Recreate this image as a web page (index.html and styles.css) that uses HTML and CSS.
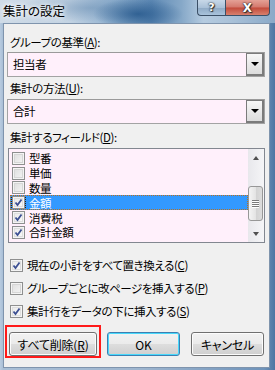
FILE: index.html
```html
<!DOCTYPE html>
<html lang="ja">
<head>
    <meta charset="UTF-8">
    <title>集計の設定</title>
    <link rel="stylesheet" href="styles.css">
</head>
<body>
    <div class="window">
        <div class="titlebar">
            <span class="title">集計の設定</span>
            <div class="caption">
                <span class="cap-btn help">?</span>
                <span class="cap-btn close">X</span>
            </div>
        </div>

        <div class="client">
            <div class="label lbl-first">グループの基準(<u>A</u>):</div>
            <div class="combo">
                <span class="combo-text">担当者</span>
                <span class="combo-btn"><span class="arrow"></span></span>
            </div>

            <div class="label lbl-second">集計の方法(<u>U</u>):</div>
            <div class="combo">
                <span class="combo-text">合計</span>
                <span class="combo-btn"><span class="arrow"></span></span>
            </div>

            <div class="label lbl-third">集計するフィールド(<u>D</u>):</div>
            <div class="listbox">
                <ul class="items">
                    <li class="item"><span class="box"></span><span>型番</span></li>
                    <li class="item"><span class="box"></span><span>単価</span></li>
                    <li class="item"><span class="box"></span><span>数量</span></li>
                    <li class="item selected"><span class="box checked focus"><svg viewBox="0 0 9 9"><path d="M1.5 4.5 L3.5 7 L7.5 1.5" /></svg></span><span>金額</span></li>
                    <li class="item"><span class="box checked"><svg viewBox="0 0 9 9"><path d="M1.5 4.5 L3.5 7 L7.5 1.5" /></svg></span><span>消費税</span></li>
                    <li class="item"><span class="box checked"><svg viewBox="0 0 9 9"><path d="M1.5 4.5 L3.5 7 L7.5 1.5" /></svg></span><span>合計金額</span></li>
                </ul>
                <div class="scrollbar">
                    <span class="sb-arrow up"></span>
                    <span class="sb-track"></span>
                    <span class="sb-thumb"><i></i><i></i><i></i><i></i></span>
                    <span class="sb-arrow down"></span>
                </div>
            </div>

            <div class="options">
                <div class="option"><span class="box checked"><svg viewBox="0 0 9 9"><path d="M1.5 4.5 L3.5 7 L7.5 1.5" /></svg></span><span>現在の小計をすべて置き換える(<u>C</u>)</span></div>
                <div class="option"><span class="box"></span><span>グループごとに改ページを挿入する(<u>P</u>)</span></div>
                <div class="option"><span class="box checked"><svg viewBox="0 0 9 9"><path d="M1.5 4.5 L3.5 7 L7.5 1.5" /></svg></span><span>集計行をデータの下に挿入する(<u>S</u>)</span></div>
            </div>

            <div class="buttons">
                <button class="btn btn-remove">すべて削除(<u>R</u>)</button>
                <button class="btn btn-ok">OK</button>
                <button class="btn btn-cancel">キャンセル</button>
                <span class="marker"></span>
            </div>
        </div>
    </div>
</body>
</html>
```

FILE: styles.css
```css
* {
    box-sizing: border-box;
}
body {
    margin: 0;
    width: 275px;
    height: 370px;
    overflow: hidden;
    font-family: "Noto Sans CJK JP", "Noto Sans", sans-serif;
    font-size: 11.5px;
    letter-spacing: -0.4px;
    font-feature-settings: "palt";
    color: #000;
}
u {
    text-decoration: underline;
    text-underline-offset: 1px;
}

/* window frame */
.window {
    width: 275px;
    height: 370px;
    display: flex;
    flex-direction: column;
    padding: 0 5px 2px 3px;
    background: linear-gradient(to right, #b8cbe0 0px, #a9bfd6 3px, #9fb6cf 50%, #6f93ba 96%, #4e76a2 100%);
}
.titlebar {
    height: 23px;
    margin: 0 -5px 0 -3px;
    display: flex;
    align-items: flex-start;
    padding-left: 3px;
    background:
        radial-gradient(ellipse 45px 16px at 138px 14px, rgba(38, 88, 140, 0.85), rgba(38, 88, 140, 0) 100%),
        radial-gradient(ellipse 70px 14px at 90px 8px, rgba(90, 130, 170, 0.45), rgba(90, 130, 170, 0) 100%),
        linear-gradient(to right, #cfdbe7 0%, #c3d3e3 25%, #8fb0cf 42%, #5f8ab5 55%, #86a8c8 66%, #b5cbe0 74%, #a9c1d8 84%, #8aa9c8 100%);
}
.title {
    line-height: 22px;
    font-size: 12.5px;
    letter-spacing: 0;
    text-shadow: 0 0 4px #fff, 0 0 6px #fff;
}
.caption {
    margin-left: auto;
    margin-right: 5px;
    display: flex;
}
.cap-btn {
    height: 16px;
    display: flex;
    align-items: center;
    justify-content: center;
    color: #fff;
    font-family: "DejaVu Sans", sans-serif;
    font-weight: bold;
    font-size: 11px;
    letter-spacing: 0;
    border: 1px solid #3b4f66;
    border-top: none;
    text-shadow: 0 0 1px #222, 0 0 2px #222, 1px 1px 1px #333;
}
.help {
    width: 28px;
    border-radius: 0 0 0 4px;
    border-right: none;
    background: linear-gradient(#c8d8e8 0%, #aac1d8 50%, #8ea9c4 51%, #a9c3dc 100%);
}
.close {
    width: 45px;
    border-radius: 0 0 4px 0;
    font-size: 12px;
    background: linear-gradient(#e4a196 0%, #d4786c 48%, #c24a3a 52%, #d8806e 100%);
}

/* client area */
.client {
    flex: 1;
    background-color: #f0f0f0;
    border: 1px solid #7f94ad;
    padding: 0 4px 0 3px;
    position: relative;
}
.label {
    height: 16px;
    line-height: 16px;
    padding-left: 3px;
}
.lbl-first {
    margin-top: 10px;
}
.lbl-second {
    margin-top: 3px;
}
.lbl-third {
    margin-top: 5px;
}

.combo {
    height: 25px;
    margin-top: 2px;
    display: flex;
    background-color: #fff0fb;
    border: 1px solid #a3a3a3;
    border-top-color: #9a9a9a;
}
.lbl-second + .combo {
    margin-top: 3px;
}
.combo-text {
    flex: 1;
    line-height: 23px;
    padding-left: 5px;
}
.combo-btn {
    width: 18px;
    margin: 0;
    border: 1px solid #7b7b7b;
    border-right-width: 2px;
    border-bottom-width: 2px;
    background: linear-gradient(#f7f7f7, #dcdcdc);
    display: flex;
    align-items: center;
    justify-content: center;
}
.arrow {
    width: 0;
    height: 0;
    border-left: 4px solid transparent;
    border-right: 4px solid transparent;
    border-top: 4px solid #000;
}

/* list box */
.listbox {
    height: 95px;
    margin: 3px 0 0 1px;
    display: flex;
    background-color: #fff0fb;
    border: 1px solid #828790;
}
.items {
    list-style: none;
    margin: 0;
    padding: 2px 0 0 1px;
    flex: 1;
}
.item {
    height: 14.8px;
    line-height: 14px;
    display: flex;
    align-items: center;
    gap: 4px;
    padding-left: 2px;
}
.item.selected {
    background-color: #3399ff;
    color: #fff;
    outline: 1px dotted #b87020;
    outline-offset: -1px;
}
.box {
    width: 13px;
    height: 13px;
    flex: none;
    border: 1px solid #8e8f8f;
    background: linear-gradient(135deg, #dcdcdc, #f6f6f6);
    box-shadow: inset 0 0 0 1px #f4f4f4, inset 0 0 0 2px #d6d6d6;
    display: flex;
    align-items: center;
    justify-content: center;
}
.box.checked {
    background: linear-gradient(135deg, #e8e8e8, #fbfbfb);
    box-shadow: inset 0 0 0 1px #f4f4f4, inset 0 0 0 2px #dedede;
}
.box.focus {
    outline: 1px dotted #222;
    outline-offset: 0;
}
.box svg {
    width: 9px;
    height: 9px;
}
.box path {
    fill: none;
    stroke: #3c4f92;
    stroke-width: 1.8;
}

.scrollbar {
    width: 16px;
    display: flex;
    flex-direction: column;
    align-items: center;
    background: linear-gradient(to right, #e8e8ec, #f5f5f7);
    position: relative;
}
.sb-arrow {
    height: 17px;
    width: 16px;
    display: flex;
    align-items: center;
    justify-content: center;
}
.sb-arrow::after {
    content: "";
    border-left: 3.5px solid transparent;
    border-right: 3.5px solid transparent;
}
.sb-arrow.up::after {
    border-bottom: 4px solid #505050;
}
.sb-arrow.down::after {
    border-top: 4px solid #505050;
}
.sb-track {
    flex: 1;
}
.sb-thumb {
    position: absolute;
    top: 37px;
    left: 0;
    width: 15px;
    height: 35px;
    border: 1px solid #979797;
    border-radius: 3px;
    background: linear-gradient(to right, #f4f4f4, #e4e4e4 50%, #d2d2d2 51%, #dcdcdc);
    display: flex;
    flex-direction: column;
    justify-content: center;
    align-items: center;
    gap: 1px;
}
.sb-thumb i {
    display: block;
    width: 7px;
    height: 1px;
    background-color: #7a7a7a;
    box-shadow: 0 1px 0 #fff;
}

/* options */
.options {
    margin-top: 14px;
    display: flex;
    flex-direction: column;
    gap: 7px;
    padding-left: 3px;
}
.option {
    height: 16px;
    display: flex;
    align-items: center;
    gap: 4px;
}

/* buttons */
.buttons {
    margin-top: 13px;
    display: flex;
    padding-left: 2px;
    position: relative;
}
.btn {
    height: 24px;
    font-family: inherit;
    font-size: 12px;
    letter-spacing: -0.2px;
    font-feature-settings: "palt";
    color: #000;
    border: 1px solid #707070;
    border-radius: 3px;
    padding: 0;
    background: linear-gradient(#f2f2f2 0%, #ebebeb 48%, #dddddd 52%, #cfcfcf 100%);
    box-shadow: inset 0 0 0 1px #fcfcfc;
}
.btn-remove {
    width: 88px;
}
.btn-ok {
    width: 73px;
    margin-left: 10px;
    border-color: #3c7fb1;
    box-shadow: inset 0 0 0 1px #48d8fb;
}
.btn-cancel {
    width: 73px;
    margin-left: 11px;
}
.marker {
    position: absolute;
    left: -2px;
    top: -7px;
    width: 96px;
    height: 33px;
    border: 2px solid #ff1a1a;
}
```
